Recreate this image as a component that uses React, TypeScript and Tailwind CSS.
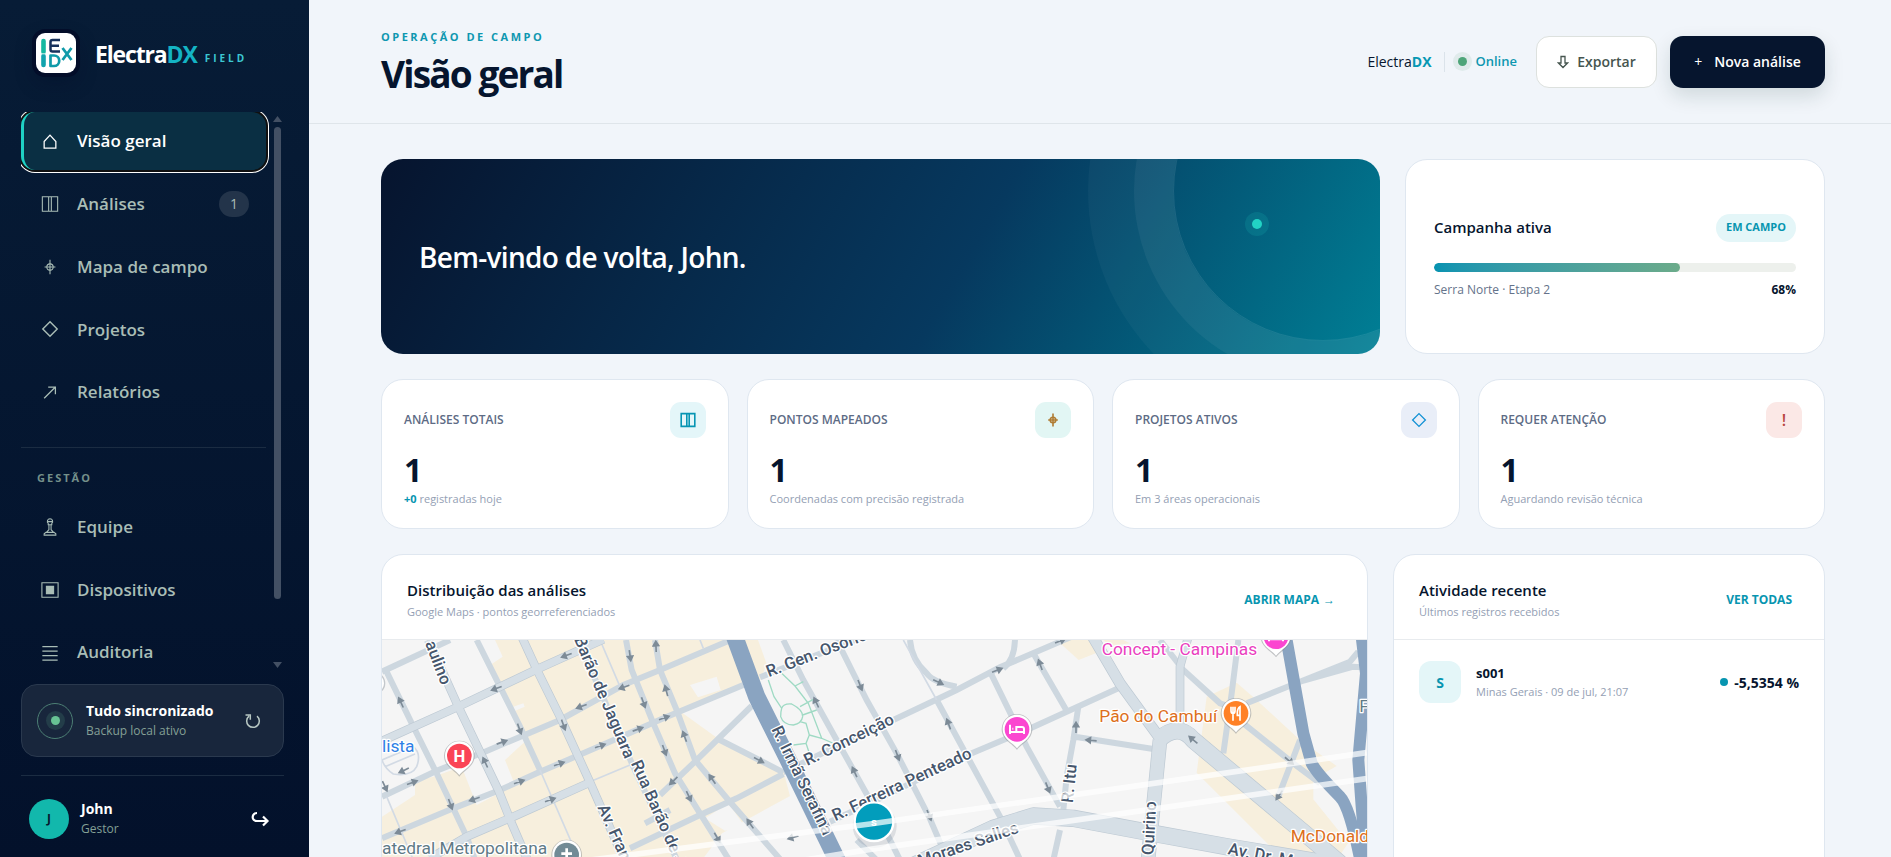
import type { ReactNode } from "react"

type IconName = "home" | "book" | "target" | "diamond" | "arrow" | "pawn" | "device" | "lines"

const icons: Record<IconName, ReactNode> = {
    home: <path d="M3.500 10.500 10 3.500l6.500 7v7.500h-13z" strokeWidth="1.400" />,
    book: <path d="M1.500 2h17v16h-17zM8.500 2v16M11.500 2v16" />,
    target: <><circle cx="10" cy="10" r="3.500" /><path d="M10 2v16M4 10h12" /></>,
    diamond: <path d="m10 2 8 8-8 8-8-8z" strokeWidth="1.600" />,
    arrow: <path d="M3.500 17 16 4.500M8 4.500h8v8" strokeWidth="1.400" />,
    pawn: <path d="M10 0.800a3 3 0 0 1 2 5.200v1.500H8V6a3 3 0 0 1 2-5.200zM8.800 8v5L6 16M11.200 8v5l2.800 3M3.500 19v-1.500l2-1.500h9l2 1.500V19zM7.500 4h5" />,
    device: <><path d="M1 2h18v16H1z" /><path d="M6 6h8v8H6z" fill="currentColor" /></>,
    lines: <path d="M1.500 4h17M1.500 9h17M1.500 14h17M1.500 19h17" />,
}

const Icon = ({ name, className = "size-5" }: { name: IconName; className?: string }) => (
    <svg viewBox="0 0 20 20" className={className} fill="none" stroke="currentColor" strokeWidth="1.200" aria-hidden="true">
        {icons[name]}
    </svg>
)

const mainNav: { icon: IconName; label: string; badge?: string; active?: boolean }[] = [
    { icon: "home", label: "Visão geral", active: true },
    { icon: "book", label: "Análises", badge: "1" },
    { icon: "target", label: "Mapa de campo" },
    { icon: "diamond", label: "Projetos" },
    { icon: "arrow", label: "Relatórios" },
]

const adminNav: { icon: IconName; label: string; badge?: string; active?: boolean }[] = [
    { icon: "pawn", label: "Equipe" },
    { icon: "device", label: "Dispositivos" },
    { icon: "lines", label: "Auditoria" },
]

const NavItem = ({ icon, label, badge, active }: (typeof mainNav)[number]) => (
    <a
        href="#"
        className={
            active
                ? "flex h-[58px] shrink-0 items-center gap-4 rounded-[14px] border-l-[3px] border-[#1fd1c4] bg-[#0a2f43] pr-[17px] pl-[15px] text-white shadow-[0_0_0_2px_#101010,0_0_0_3px_#ffffff]"
                : "flex h-[58px] shrink-0 items-center gap-4 pr-[17px] pl-[18px] text-[#a9bdb6]"
        }
    >
        <span className="flex w-[22px] justify-center"><Icon name={icon} className="size-[18px]" /></span>
        <span className="text-[17px] font-semibold whitespace-nowrap">{label}</span>
        {badge && (
            <span className="ml-auto flex h-[26px] w-[30px] items-center justify-center rounded-full bg-[#23344a] text-[14px] font-medium">{badge}</span>
        )}
    </a>
)

const Logo = () => (
    <span className="flex size-10 items-center justify-center rounded-[9px] bg-white shadow-[0_0_0_4px_#030d29,0_8px_20px_#030d2966]">
        <svg viewBox="0 0 40 40" className="size-10" fill="none" strokeLinejoin="round" aria-hidden="true">
            <path d="M7.500 8v11" stroke="#14b8a0" strokeWidth="4.600" strokeLinecap="round" />
            <path d="M7.500 23v9" stroke="#11a3ad" strokeWidth="4.600" strokeLinecap="round" />
            <path d="M5 20.800h5" stroke="#d8f3f0" strokeWidth="1" />
            <path d="M24 7h-7.500a2 2 0 0 0-2 2v7.500a2 2 0 0 0 2 2H24M14.500 12.700h8.500" stroke="#17315c" strokeWidth="2.500" />
            <path d="M14.500 22.500v10.500h3.500a5.200 5.200 0 0 0 0-10.500z" stroke="#109aa9" strokeWidth="2.700" />
            <path d="m26.500 15 9 12M35.500 15l-9 12" stroke="#109aa9" strokeWidth="2.800" />
        </svg>
    </span>
)

const Sidebar = () => (
    <aside className="flex w-[309px] shrink-0 flex-col bg-linear-to-b from-[#071c36] to-[#03112b] pr-[25px] pl-[21px] text-white">
        <div className="flex h-28 shrink-0 items-start gap-[19px] pt-[33px] pl-[15px]">
            <Logo />
            <div className="flex h-[42px] items-center gap-2">
                <span className="text-[23px] font-bold tracking-tighter">Electra<span className="text-[#14b4c4]">DX</span></span>
                <span className="pt-2 text-[10px] font-bold tracking-[3px] text-[#3cc8d3]">FIELD</span>
            </div>
        </div>

        <div className="flex min-h-0 flex-1 gap-1">
            <nav className="min-h-0 w-[248px] overflow-hidden pr-[3px]">
                <div className="flex h-[309px] flex-col justify-between">
                    {mainNav.map((item) => <NavItem key={item.label} {...item} />)}
                </div>
                <hr className="mt-[26px] border-[#1b2c42]" />
                <p className="mt-5 pl-4 text-[11px] leading-5 font-bold tracking-[2px] text-[#74908a]">GESTÃO</p>
                <div className="mt-[10px] flex h-[183px] flex-col justify-between">
                    {adminNav.map((item) => <NavItem key={item.label} {...item} />)}
                </div>
            </nav>
            <div className="flex w-2 flex-col items-center py-1 text-[#435064]">
                <svg viewBox="0 0 9 6" className="h-[6px] w-[9px]" aria-hidden="true"><path d="M4.500 0 9 6H0z" fill="currentColor" /></svg>
                <div className="mt-[5px] h-[472px] w-[7px] rounded-full bg-current" />
                <svg viewBox="0 0 9 6" className="mt-auto h-[6px] w-[9px]" aria-hidden="true"><path d="M4.500 6 9 0H0z" fill="currentColor" /></svg>
            </div>
        </div>

        <div className="mt-3 flex h-[73px] shrink-0 items-center gap-[13px] rounded-[16px] border border-[#2a394e] bg-[#18263c] pr-5 pl-[15px]">
            <span className="flex size-9 items-center justify-center rounded-full border border-[#4c7f74]">
                <span className="flex size-[19px] items-center justify-center rounded-full bg-[#233d49]">
                    <span className="size-[9px] rounded-full bg-[#67c394]" />
                </span>
            </span>
            <div className="flex-1">
                <p className="text-[14px] leading-5 font-bold">Tudo sincronizado</p>
                <p className="text-[12px] leading-5 text-[#84a096]">Backup local ativo</p>
            </div>
            <button aria-label="Sincronizar" className="text-[#b6c6c2]">
                <svg viewBox="0 0 20 20" className="size-5" fill="none" stroke="currentColor" strokeWidth="1.500" aria-hidden="true">
                    <path d="M14 5.200a6.300 6.300 0 1 1-8 0M2.500 4h4.800v4.800" />
                </svg>
            </button>
        </div>

        <div className="mt-[18px] flex h-[82px] shrink-0 items-center gap-3 border-t border-[#1b2c42] pt-1 pr-[14px] pl-2">
            <span className="flex size-10 items-center justify-center rounded-full bg-[#12b8ac] text-[12px] font-bold text-[#06182f]">J</span>
            <div className="flex-1">
                <p className="text-[14px] leading-5 font-bold">John</p>
                <p className="text-[12px] leading-5 text-[#84a096]">Gestor</p>
            </div>
            <button aria-label="Sair">
                <svg viewBox="0 0 20 20" className="size-5" fill="none" stroke="currentColor" strokeWidth="2.200" aria-hidden="true">
                    <path d="M7 4C1.500 4 1 12 7 12h10M13 7.500l4.500 4.500-4.500 4.500" />
                </svg>
            </button>
        </div>
    </aside>
)

const Header = () => (
    <header className="flex h-[124px] shrink-0 items-center justify-between border-b border-[#dfe5ea] pr-[66px] pl-[72px]">
        <div className="pt-1">
            <p className="text-[11px] leading-4 font-bold tracking-[2.500px] text-[#0e97b0]">OPERAÇÃO DE CAMPO</p>
            <h1 className="mt-1 text-[37px] leading-[50px] font-bold tracking-tighter text-[#06152e]">Visão geral</h1>
        </div>
        <div className="flex items-center">
            <span className="text-[14px] font-medium text-[#06152e]">Electra<b className="text-[#0798b3]">DX</b></span>
            <span className="ml-3 h-5 w-px bg-[#dbe3ea]" />
            <span className="ml-2 flex size-[19px] items-center justify-center rounded-full bg-[#e0ebeb]">
                <span className="size-[9px] rounded-full bg-[#4ea579]" />
            </span>
            <span className="ml-1 text-[13px] font-semibold text-[#0e97b0]">Online</span>
            <button className="ml-[19px] flex h-[52px] w-[121px] items-center justify-center gap-2 rounded-[13px] border border-[#dde1de] bg-white text-[14px] font-semibold text-[#46554f]">
                <svg viewBox="0 0 12 14" className="h-[14px] w-3" fill="none" stroke="currentColor" strokeWidth="1.300" aria-hidden="true">
                    <path d="M4 1.500h4V8h2.500L6 12.500 1.500 8H4z" />
                </svg>
                Exportar
            </button>
            <button className="ml-[13px] flex h-[52px] w-[155px] items-center justify-center gap-3 rounded-[13px] bg-[#06152e] text-[14px] font-semibold text-white shadow-[0_8px_20px_#06352e24]">
                <span className="font-medium">+</span>
                Nova análise
            </button>
        </div>
    </header>
)

const stats: { label: string; icon?: IconName; value: string; lead?: string; note: string; tone: string }[] = [
    { label: "ANÁLISES TOTAIS", icon: "book", value: "1", lead: "+0", note: "registradas hoje", tone: "bg-[#e4f6f9] text-[#0795b3]" },
    { label: "PONTOS MAPEADOS", icon: "target", value: "1", note: "Coordenadas com precisão registrada", tone: "bg-[#e2f6f4] text-[#b07c33]" },
    { label: "PROJETOS ATIVOS", icon: "diamond", value: "1", note: "Em 3 áreas operacionais", tone: "bg-[#e9eef8] text-[#1090d4]" },
    { label: "REQUER ATENÇÃO", value: "1", note: "Aguardando revisão técnica", tone: "bg-[#fbe8e6] text-[#b9463f]" },
]

/* x, y, rotation of the one-way arrows */
const arrows = [
    [590, 346, 160], [380, 445, 160], [93, 488, -115], [448, 566, 70], [580, 554, 70], [395, 607, -20], [346, 668, -115],
    [567, 672, -20], [447, 726, -20], [126, 728, -20], [241, 792, 70], [314, 777, 160], [540, 780, -20], [92, 874, 160],
    [780, 346, 82], [858, 320, -92], [763, 441, 160], [889, 453, -105], [820, 487, 70], [635, 499, 160], [882, 534, -20],
    [803, 568, -20], [944, 590, -110], [690, 618, -20], [883, 630, 70], [1166, 660, 28], [911, 722, 135], [1027, 718, -125],
    [956, 768, 65], [1141, 852, -125], [1041, 892, 60], [1270, 892, 165], [1470, 435, 68], [1339, 488, -115], [1454, 697, -115],
    [1704, 426, 25], [1881, 391, -22], [2070, 303, -22], [2011, 375, -110], [1736, 553, -110], [2118, 563, -90], [2164, 601, 185],
    [1582, 645, 70], [2033, 742, 68], [1677, 825, 68], [2470, 600, -140], [2757, 662, 40], [2728, 765, 125], [102, 691, 155], [44, 738, 65],
]

const streetLabels: [number, number, number, string][] = [
    [165, 310, 69, "aulino"],
    [612, 298, 67, "Barão de Jaguara"],
    [782, 670, 66, "Rua Barão de Jaguara"],
    [682, 802, 66, "Av. Francisco"],
    [1204, 568, 64, "R. Irmã Serafina"],
    [1196, 412, -21, "R. Gen. Osorio"],
    [1312, 678, -26, "R. Conceição"],
    [1396, 844, -25, "R. Ferreira Penteado"],
    [2108, 790, -84, "R. Itu"],
    [2350, 946, -87, "Quirino"],
    [1650, 980, -19, "Moraes Salles"],
    [2572, 942, 11, "Av. Dr. Moraes"],
]

const Pin = ({ x, y, color, children }: { x: number; y: number; color: string; children: ReactNode }) => (
    <g transform={`translate(${x} ${y})`}>
        <path d="M0 62C-12 44-46 32-46 0a46 46 0 0 1 92 0c0 32-34 44-46 62z" fill="#8b8f94" opacity=".5" />
        <path d="M0 57C-12 40-43 30-43-1a43 43 0 0 1 86 0c0 31-31 41-43 58z" fill="#fff" />
        <circle r="37" fill={color} />
        {children}
    </g>
)

const Bed = () => (
    <path d="M-21-14v28M-21 8h42v6M21 8V-1q0-6-6-6H-2V8M-14-2h3" fill="none" stroke="#fff" strokeWidth="6" />
)

const FieldMap = () => (
    <svg viewBox="36 300 2955 1260" preserveAspectRatio="xMinYMin slice" className="block h-[420px] w-full bg-[#f5f5f5] font-[Roboto,sans-serif]" role="img" aria-label="Mapa das análises">
        {/* commercial blocks */}
        <g fill="#f7efdd">
            <path d="M375 300l23 50-33 22 40 98 35 90 30 40-65 60 30 75-115 60-45-115-85 30-55 12v43L36 830v730h1050l-90-600 60-80 204-112-20-75-190-93-125-90 195-70-40-140z" />
            <path d="M1120 300h44l26 72-20 50z" />
            <path d="M2060 300l66 60 70-28-30-32z" />
            <path d="M2510 470l90-42 60 52 130 120 110 78-70 40 0 60 105 130-40 60-165-20-250-250 8-60z" />
            <path d="M2200 300h60l20 10-60 8z" />
        </g>
        <g fill="#f5f5f5">
            <path d="M960 435l80-25 12 40-68 22z" />
            <path d="M430 500l30-10 4 10-28 12z" />
            <path d="M1005 835l70-45 50 70-60 12z" />
        </g>

        {/* minor streets */}
        <g fill="none" stroke="#cdd7df" strokeWidth="18">
            <path d="M36 395 240 300" />
            <path d="M36 770 200 692 345 635 570 540 760 435 870 390 1075 303" />
            <path d="M36 895 250 805 390 750 500 700 690 618 882 534 1120 435" />
            <path d="M780 925 990 825 1100 775 1240 702" />
            <path d="M45 385 130 560 200 700 290 890 330 1000" />
            <path d="M320 300 390 440 450 560 510 690" />
            <path d="M768 300 785 390 850 550 915 700 990 820 1090 980" />
            <path d="M855 300 870 390 920 510 975 660 1075 780 1250 980" />
            <path d="M620 290 790 680 940 1000" />
            <path d="M1145 498 975 665 870 765M825 850 900 810M1050 600 1240 697" />
            <path d="M1240 300 1300 420 1500 780 1600 980" />
            <path d="M1400 300 1490 480 1580 640 1677 830 1720 930" />
            <path d="M1170 412 1480 290" />
            <path d="M1240 697 1500 570 1570 540 1760 450 1890 382 2105 290" />
            <path d="M1380 845 1500 790 1800 642 1970 570 2090 515 2245 445" />
            <path d="M1620 300q5 60 50 100 20 28 90 40M1935 300q-2 60-35 85" />
            <path d="M1700 480 1890 830 1960 980" />
            <path d="M1860 395 1970 620 2070 800M1990 340 2090 512" />
            <path d="M2125 500 2110 600 2090 710 2080 810M2115 590 2350 627" />
            <path d="M2370 300 2440 390 2550 490 2580 500M2605 300 2585 460 2560 640" />
            <path d="M2630 490 2790 425 2940 365 2965 335M2790 425 2950 380 2975 382" />
            <path d="M2620 550 2770 670 2850 730M2790 600 2725 770" />
            <path d="M2070 870 2050 960M1460 900l120 120" />
        </g>
        <g fill="none" stroke="#d2dae4" strokeWidth="5">
            <path d="M690 300 750 440M510 690 610 920M660 725 780 675M50 770 130 960M1600 300 1700 480M990 300l10 25" />
            <path d="M36 660 130 620q25 20 10 60-15 30-70 22-25-15-34-42M45 680l90-38" />
        </g>

        {/* avenues */}
        {[{ c: "#bdc9d3", e: 4 }, { c: "#d6dfe6", e: 0 }].map(({ c, e }) => (
            <g key={c} fill="none" stroke={c} strokeLinejoin="round">
                <g strokeWidth={22 + e}>
                    <path d="M36 603 265 500 500 388 700 298" />
                    <path d="M180 955 290 890 430 830 660 727" />
                    <path d="M175 300 265 500 385 750 425 850 490 1000" />
                    <path d="M455 290 500 388 570 530 660 727 780 1000" />
                    <path d="M2455 290 2430 380 2430 580" />
                </g>
                <path strokeWidth={30 + e} d="M2165 285 2250 430 2370 595" />
                <path strokeWidth={40 + e} d="M2370 600 2330 1000" />
                <path strokeWidth={48 + e} d="M2365 600q60-55 105 0l370 310 70 60" />
                <path strokeWidth={48 + e} d="M1580 1000 1870 865 1990 828 2110 835 2350 880 2570 920 2990 990" />
            </g>
        ))}

        {/* expressways */}
        <g fill="none" stroke="#8aa4c1">
            <path strokeWidth="52" d="M1092 285 1160 470 1250 650 1440 1040" />
            <path strokeWidth="36" d="M2748 290 2800 580 2825 670Q2840 700 2910 770 2940 800 2975 980" />
            <path strokeWidth="36" d="M2975 290 2988 400 2965 660 2975 800 2990 980" />
        </g>

        {/* park paths */}
        <path d="M1235 400 1275 438 1315 490 1355 595 1395 612M1275 438 1300 425M1195 420 1212 470 1235 505Q1240 490 1265 492 1300 510 1298 530 1295 550 1270 555 1240 555 1232 530 1232 515 1235 505M1298 525 1340 510M1290 500 1330 478M1290 545 1308 550 1318 585 1308 610 1270 615M1318 585 1355 595M1308 610 1318 640" fill="none" stroke="#9fdac4" strokeWidth="4" />

        <g fill="#7d8b97" stroke="#7d8b97">
            {arrows.map(([x, y, r]) => (
                <path key={`${x}-${y}`} d="M-16 0H4M3-8 16 0 3 8z" strokeWidth="5" transform={`translate(${x} ${y}) rotate(${r})`} />
            ))}
        </g>

        <g fontSize="50" fontWeight="500" fill="#46566c" stroke="#fff" strokeWidth="8" strokeLinejoin="round" paintOrder="stroke">
            {streetLabels.map(([x, y, r, label]) => (
                <text key={label} transform={`translate(${x} ${y}) rotate(${r})`}>{label}</text>
            ))}
        </g>

        <g fontSize="52" stroke="#fff" strokeWidth="8" strokeLinejoin="round" paintOrder="stroke">
            <text x="36" y="636" fill="#2f7fe6">lista</text>
            <text x="36" y="943" fill="#5f7a86">atedral Metropolitana</text>
            <text x="2195" y="345" fill="#ea3fc0">Concept - Campinas</text>
            <text x="2188" y="545" fill="#dd6f1c">Pão do Cambuí</text>
            <text x="2762" y="907" fill="#dd6f1c">McDonald's</text>
            <text x="2968" y="515" fill="#5f7a86">F</text>
        </g>

        <circle cx="12" cy="430" r="32" fill="#fff" stroke="#c4c8cc" strokeWidth="4" />
        <Pin x={268} y={648} color="#fa4456">
            <text textAnchor="middle" y="18" fontSize="50" fontWeight="700" fill="#fff">H</text>
        </Pin>
        <Pin x={590} y={945} color="#728b96"><path d="M-16-4h32M0-20v32" stroke="#fff" strokeWidth="8" /></Pin>
        <Pin x={1941} y={568} color="#fb46d0"><Bed /></Pin>
        <Pin x={2718} y={290} color="#fb46d0"><Bed /></Pin>
        <Pin x={2598} y={520} color="#ff8126">
            <path d="M-15-20v12q0 8 6 8t6-8v-12M-9-20v42M12 22v-42q-8 4-8 20v6h8" fill="none" stroke="#fff" strokeWidth="5" />
        </Pin>

        <circle cx="1514" cy="858" r="66" fill="#48586b" opacity=".14" />
        <circle cx="1512" cy="845" r="58" fill="#029dbc" stroke="#fff" strokeWidth="7" />
        <path d="M600 968 1500 852 2990 638M1060 1000 1500 928 2990 716" fill="none" stroke="#fff" strokeWidth="17" opacity=".72" />
        <text x="1512" y="859" textAnchor="middle" fontSize="34" fontWeight="700" fill="#fff">s</text>
    </svg>
)

const Panel = ({ title, subtitle, action, children }: { title: string; subtitle: string; action: ReactNode; children: ReactNode }) => (
    <section className="overflow-hidden rounded-[22px] border border-[#dfe7f0] bg-white">
        <div className="flex h-[85px] items-center justify-between border-b border-[#e8ebee] pt-[6px] pr-8 pl-[25px]">
            <div>
                <h2 className="text-[15px] leading-6 font-semibold text-[#06152e]">{title}</h2>
                <p className="text-[11px] leading-5 text-[#94a0b4]">{subtitle}</p>
            </div>
            <a href="#" className="flex items-center gap-1 text-[12px] font-bold text-[#0795b0]">{action}</a>
        </div>
        {children}
    </section>
)

const App = () => {
    return (
        <div className="flex h-screen overflow-hidden bg-[#f1f5fa] font-['Open_Sans','Noto_Sans',sans-serif] text-[#06152e]">
            <Sidebar />
            <div className="flex min-w-0 flex-1 flex-col overflow-hidden">
                <Header />
                <main className="flex flex-col gap-[25px] pt-[35px] pr-[66px] pl-[72px]">
                    <div className="grid grid-cols-[minmax(0,1fr)_420px] gap-[25px]">
                        <section className="relative flex h-[195px] items-center overflow-hidden rounded-[22px] bg-[linear-gradient(120deg,#06142e_0%,#06395f_58%,#007f95_100%)] px-[38px]">
                            <span className="absolute -top-[118px] -right-[93px] size-[300px] rounded-full border border-white/10 shadow-[0_0_0_39px_#ffffff0d,0_0_0_85px_#ffffff09]" />
                            <span className="absolute top-[53px] right-[111px] flex size-6 items-center justify-center rounded-full bg-[#1fd1c4]/15">
                                <span className="size-[10px] rounded-full bg-[#22d3c5]" />
                            </span>
                            <h2 className="text-[28px] font-semibold tracking-tight text-white">Bem-vindo de volta, John.</h2>
                        </section>

                        <section className="flex flex-col justify-center rounded-[22px] border border-[#dfe7f0] bg-white px-7">
                            <div className="flex items-center justify-between">
                                <h2 className="text-[15px] font-semibold">Campanha ativa</h2>
                                <span className="flex h-7 items-center rounded-full bg-[#e4f6f8] px-[10px] text-[11px] font-bold text-[#0795b0]">EM CAMPO</span>
                            </div>
                            <div className="mt-[21px] h-[9px] overflow-hidden rounded-full bg-[#edf0ec]">
                                <div className="h-full w-[68%] rounded-full bg-linear-to-r from-[#0593b1] to-[#6bab8a]" />
                            </div>
                            <div className="mt-2 flex items-center justify-between text-[12px] leading-5">
                                <span className="text-[#64728a]">Serra Norte · Etapa 2</span>
                                <b>68%</b>
                            </div>
                        </section>
                    </div>

                    <div className="grid grid-cols-4 gap-[18px]">
                        {stats.map((stat) => (
                            <section key={stat.label} className="h-[150px] rounded-[22px] border border-[#dfe7f0] bg-white px-[22px] pt-[22px]">
                                <div className="flex items-center justify-between">
                                    <span className="text-[12px] font-semibold text-[#5d6b85]">{stat.label}</span>
                                    <span className={`flex size-9 items-center justify-center rounded-[11px] text-[16px] font-semibold ${stat.tone}`}>
                                        {stat.icon ? <Icon name={stat.icon} className="size-4 stroke-2" /> : "!"}
                                    </span>
                                </div>
                                <p className="mt-3 text-[32px] leading-10 font-bold">{stat.value}</p>
                                <p className="text-[11px] leading-[18px] text-[#94a0b4]">
                                    {stat.lead && <b className="text-[#0795b0]">{stat.lead} </b>}
                                    {stat.note}
                                </p>
                            </section>
                        ))}
                    </div>

                    <div className="grid grid-cols-[minmax(0,1fr)_432px] gap-[25px]">
                        <Panel
                            title="Distribuição das análises"
                            subtitle="Google Maps · pontos georreferenciados"
                            action={<>ABRIR MAPA <span className="font-normal">→</span></>}
                        >
                            <FieldMap />
                        </Panel>
                        <Panel title="Atividade recente" subtitle="Últimos registros recebidos" action="VER TODAS">
                            <div className="flex items-center px-[25px] pt-[21px]">
                                <span className="flex size-[42px] items-center justify-center rounded-[12px] bg-[#e4f6f8] text-[14px] font-bold text-[#0795b0]">S</span>
                                <div className="ml-[15px] flex-1">
                                    <p className="text-[13px] leading-5 font-bold">s001</p>
                                    <p className="text-[11px] leading-[18px] text-[#94a0b4]">Minas Gerais · 09 de jul, 21:07</p>
                                </div>
                                <span className="mr-[6px] size-2 rounded-full bg-[#0795b0]" />
                                <span className="text-[14px] font-bold">-5,5354 %</span>
                            </div>
                        </Panel>
                    </div>
                </main>
            </div>
        </div>
    )
}

export default App
